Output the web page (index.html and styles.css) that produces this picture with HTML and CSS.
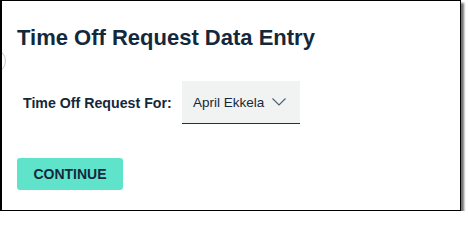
FILE: index.html
```html
<!DOCTYPE html>
<html>
<head>
<meta charset="utf-8">
<link rel="stylesheet" href="styles.css">
</head>
<body>
<div class="card">
  <span class="handle"></span>
  <h1 class="title">Time Off Request Data Entry</h1>
  <div class="field-row">
    <label class="field-label">Time Off Request For:</label>
    <div class="select">
      <span class="select-value">April Ekkela</span>
      <svg class="chevron" width="14" height="8" viewBox="0 0 14 8"><path d="M0.5 0.5 L7 7 L13.5 0.5" fill="none" stroke="#4a5e70" stroke-width="1.1"/></svg>
    </div>
  </div>
  <div class="actions">
    <button class="btn-continue">CONTINUE</button>
  </div>
</div>
</body>
</html>
```
FILE: styles.css
```css
html, body {
  margin: 0;
  padding: 0;
  background: #ffffff;
}
body {
  font-family: "Liberation Sans", Arial, sans-serif;
  color: #15293c;
}
.card {
  position: relative;
  box-sizing: border-box;
  width: 461px;
  height: 211px;
  border: 1px solid #000;
  border-left-width: 2px;
  background: #fff;
  box-shadow: 3px 3px 2px rgba(0, 0, 0, 0.55);
  padding: 24px 0 0 15px;
  display: flex;
  flex-direction: column;
  overflow: hidden;
}
.handle {
  position: absolute;
  left: -22px;
  top: 47px;
  width: 24px;
  height: 24px;
  border-radius: 50%;
  border: 1px solid #c8c8c8;
}
.title {
  margin: 0;
  font-size: 22px;
  line-height: 26px;
  font-weight: 700;
  color: #14283b;
}
.field-row {
  display: flex;
  align-items: center;
  margin-top: 30px;
  padding-left: 6px;
}
.field-label {
  font-size: 14.2px;
  font-weight: 700;
  color: #14283b;
  width: 159px;
}
.select {
  box-sizing: border-box;
  display: flex;
  align-items: center;
  width: 118px;
  height: 43px;
  padding: 0 14px 0 11px;
  background: #f1f3f3;
  border-bottom: 1px solid #1d3144;
}
.select-value {
  font-size: 13.5px;
  color: #14283b;
}
.chevron {
  margin-left: auto;
  display: block;
}
.actions {
  margin-top: 34px;
  display: flex;
}
.btn-continue {
  width: 106px;
  height: 32px;
  border: none;
  border-radius: 3px;
  background: #5fe3cb;
  font-family: "Liberation Sans", Arial, sans-serif;
  font-size: 14px;
  font-weight: 700;
  color: #15293c;
  padding: 0;
  cursor: pointer;
}
```
